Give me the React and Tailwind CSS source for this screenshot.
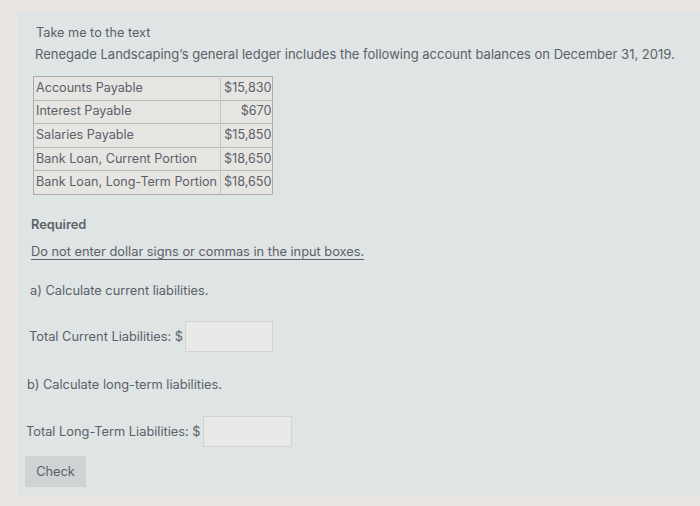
import React from "react";

const rows = [
  ["Accounts Payable", "$15,830"],
  ["Interest Payable", "$670"],
  ["Salaries Payable", "$15,850"],
  ["Bank Loan, Current Portion", "$18,650"],
  ["Bank Loan, Long-Term Portion", "$18,650"],
];

const App = () => {
  return (
    <div
      className="h-[506px] w-[700px] overflow-hidden bg-[#e8e5e2] pl-[18px] pt-[12px] text-[#5b6169]"
      style={{ fontFamily: "Inter, 'Liberation Sans', sans-serif" }}
    >
      <div className="h-[485px] bg-[#dfe4e4] pl-[18px] pt-[11px]">
        <p className="text-[12.7px] leading-[20px]">Take me to the text</p>
        <p className="mt-[1px] -ml-[1px] text-[13px] leading-[20px] whitespace-nowrap">
          Renegade Landscaping’s general ledger includes the following account
          balances on December 31, 2019.
        </p>

        <table className="mt-[12px] -ml-[3px] border border-[#a9adaf] bg-[#e6e5e2] text-[12.6px]">
          <tbody>
            {rows.map(([name, amount]) => (
              <tr key={name} className="h-[23.6px] border-b border-[#b8bbbc] last:border-b-0">
                <td className="border-r border-[#c4c6c6] pl-[2px] pr-[3px] whitespace-nowrap">
                  {name}
                </td>
                <td className="pl-[3px] pr-[1px] text-right whitespace-nowrap">{amount}</td>
              </tr>
            ))}
          </tbody>
        </table>

        <div className="-ml-[5px]">
          <p className="mt-[20px] text-[12.8px] font-semibold leading-[20px]">Required</p>
          <p className="mt-[7px] text-[12.8px] leading-[20px] underline underline-offset-[3px]">
            Do not enter dollar signs or commas in the input boxes.
          </p>

          <p className="mt-[19px] -ml-[1px] text-[12.8px] leading-[20px]">
            a) Calculate current liabilities.
          </p>

          <div className="mt-[20px] -ml-[2px] flex h-[31px] items-center text-[12.8px]">
            <span>Total Current Liabilities: $</span>
            <input
              type="text"
              className="ml-[2px] h-[31px] w-[88px] border border-[#d2d4d2] bg-[#e9eae7] outline-none"
            />
          </div>

          <p className="mt-[23px] -ml-[4px] text-[12.8px] leading-[20px]">
            b) Calculate long-term liabilities.
          </p>

          <div className="mt-[21px] -ml-[5px] flex h-[31px] items-center text-[12.8px]">
            <span>Total Long-Term Liabilities: $</span>
            <input
              type="text"
              className="ml-[2px] h-[31px] w-[89px] border border-[#d2d4d2] bg-[#e9eae7] outline-none"
            />
          </div>

          <button className="mt-[9px] -ml-[6px] block h-[31px] w-[61px] bg-[#cfd3d4] text-[12.8px] text-[#5b6169]">
            Check
          </button>
        </div>
      </div>
    </div>
  );
};

export default App;
